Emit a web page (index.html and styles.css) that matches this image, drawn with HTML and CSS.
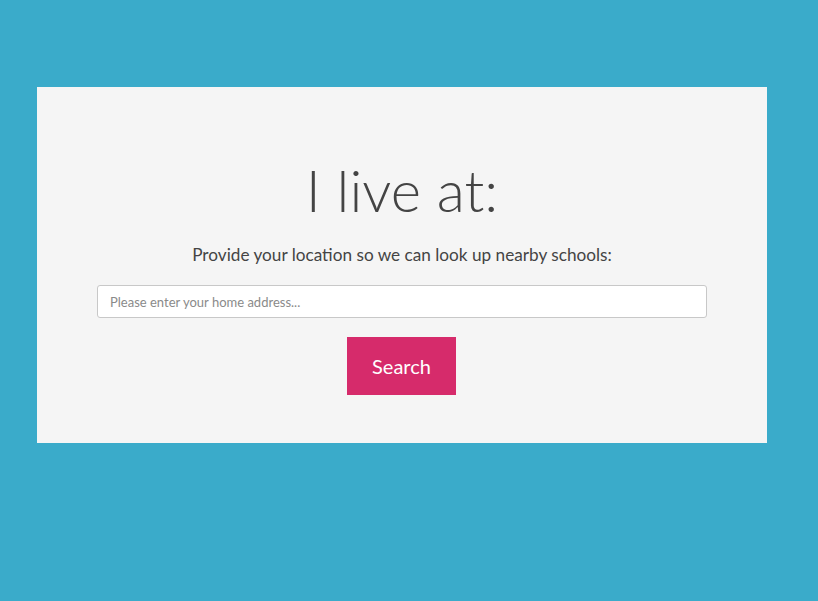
FILE: index.html
```html
<!DOCTYPE html>
<html>
<head>
<meta charset="utf-8">
<link rel="stylesheet" href="styles.css">
</head>
<body>
<div class="page">
  <div class="card">
    <h1 class="title">I live at:</h1>
    <p class="lead">Provide your location so we can look up nearby schools:</p>
    <input class="address" type="text" placeholder="Please enter your home address...">
    <button class="search">Search</button>
  </div>
</div>
</body>
</html>
```
FILE: styles.css
```css
html, body {
  margin: 0;
  padding: 0;
  background: #3aabca;
  height: 100%;
}
.page {
  padding: 87px 0 0 37px;
}
.card {
  width: 730px;
  height: 356px;
  box-sizing: border-box;
  background: #f5f5f5;
  display: flex;
  flex-direction: column;
  align-items: center;
  padding-top: 64px;
  font-family: Lato, "Open Sans", sans-serif;
}
.title {
  margin: 0;
  font-weight: 300;
  font-size: 58px;
  line-height: 78px;
  color: #444;
}
.lead {
  margin: 14px 0 0;
  font-size: 17.2px;
  line-height: 24px;
  color: #444;
}
.address {
  margin-top: 18px;
  width: 610px;
  height: 33px;
  box-sizing: border-box;
  border: 1px solid #c8c8c8;
  border-radius: 3px;
  background: #fff;
  padding: 0 12px;
  font-family: Lato, sans-serif;
  font-size: 13px;
  color: #555;
}
.address::placeholder {
  color: #8a8a8a;
}
.search {
  margin-top: 19px;
  margin-right: 1px;
  width: 109px;
  height: 58px;
  border: none;
  background: #d62b6b;
  color: #fff;
  font-family: Lato, sans-serif;
  font-size: 20px;
  padding: 0;
}
```
